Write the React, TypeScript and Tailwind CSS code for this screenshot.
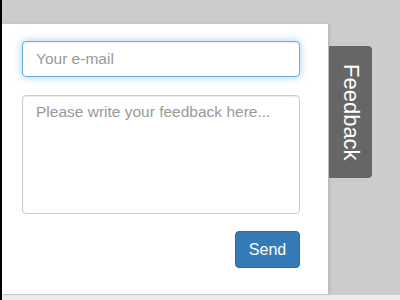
import React from 'react';

export default function App() {
  return (
    <div className="flex w-[400px] h-[300px] bg-[#cccccc] overflow-hidden" style={{ fontFamily: '"Liberation Sans", Arial, sans-serif' }}>
      {/* left edge */}
      <div className="w-[2px] h-full bg-black flex-shrink-0" />

      <div className="flex flex-col flex-1">
        {/* top gray band */}
        <div className="h-[24px] flex-shrink-0" />

        <div className="flex flex-1">
          {/* feedback panel */}
          <div className="relative z-10 w-[326px] bg-white pl-[20px] pr-[28px] pt-[17px] flex flex-col shadow-[2px_0_3px_rgba(0,0,0,0.09)]">
            <input
              type="email"
              placeholder="Your e-mail"
              className="w-[278px] h-[36px] px-[13px] text-[15.5px] text-[#555] bg-white border border-[#66afe9] rounded-[4px] outline-none shadow-[inset_0_1px_1px_rgba(0,0,0,0.075),0_0_8px_rgba(102,175,233,0.6)] placeholder:text-[#999]"
            />
            <textarea
              placeholder="Please write your feedback here..."
              className="mt-[18px] w-[278px] h-[119px] px-[13px] pt-[5px] text-[15.5px] leading-[21px] text-[#555] bg-white border border-[#cccccc] rounded-[4px] outline-none resize-none shadow-[inset_0_1px_1px_rgba(0,0,0,0.075)] placeholder:text-[#999]"
            />
            <div className="flex justify-end w-[278px] mt-[17px]">
              <button className="w-[65px] h-[37px] bg-[#337ab7] border border-[#2e6da4] rounded-[4px] text-white text-[16px]">
                Send
              </button>
            </div>
          </div>

          {/* tab */}
          <div className="pt-[22px] pl-[1px] relative z-20">
            <div className="w-[43px] h-[132px] bg-[#666666] rounded-r-[4px] flex items-center justify-center">
              <span className="text-white text-[22px] leading-none [writing-mode:vertical-rl]">Feedback</span>
            </div>
          </div>
        </div>

        {/* bottom scrollbar */}
        <div className="h-[6px] flex-shrink-0 border-t border-[#cfcfcf] bg-[#ececec]" />
      </div>
    </div>
  );
}
